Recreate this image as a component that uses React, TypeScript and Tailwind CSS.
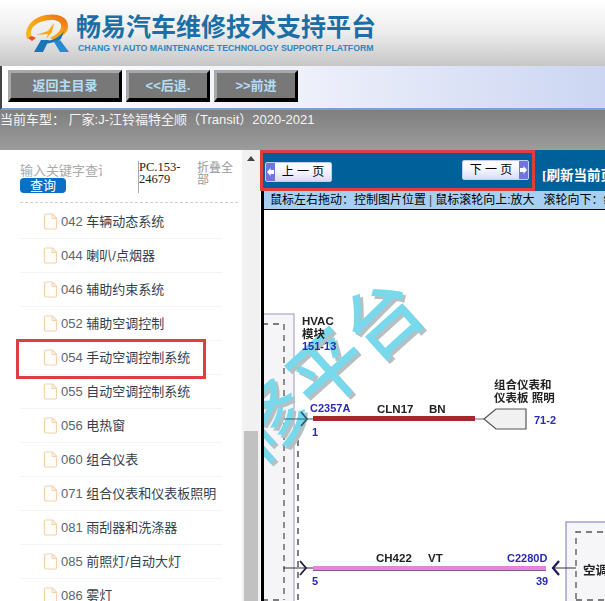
import React from "react";

const items = [
  ["042", "车辆动态系统"],
  ["044", "喇叭/点烟器"],
  ["046", "辅助约束系统"],
  ["052", "辅助空调控制"],
  ["054", "手动空调控制系统"],
  ["055", "自动空调控制系统"],
  ["056", "电热窗"],
  ["060", "组合仪表"],
  ["071", "组合仪表和仪表板照明"],
  ["081", "雨刮器和洗涤器"],
  ["085", "前照灯/自动大灯"],
  ["086", "雾灯"],
];

function FileIcon() {
  return (
    <svg width="15" height="17" viewBox="0 0 15 17" fill="none" className="shrink-0">
      <path d="M1.5 2.2q0-1.2 1.2-1.2h6.8l4 4.2v9.6q0 1.2-1.2 1.2h-9.6q-1.2 0-1.2-1.2z" stroke="#f2d3ae" strokeWidth="1.2" fill="#fffdfa" />
      <path d="M9.2 1v4.4h4.3" stroke="#f2d3ae" strokeWidth="1.1" />
    </svg>
  );
}

function Logo() {
  return (
    <svg width="48" height="42" viewBox="0 0 48 42" className="shrink-0">
      <defs>
        <linearGradient id="ring" x1="0" y1="1" x2="1" y2="0">
          <stop offset="0" stopColor="#f9bc20" />
          <stop offset="0.6" stopColor="#f59c14" />
          <stop offset="1" stopColor="#e8641b" />
        </linearGradient>
      </defs>
      <path d="M3 28C-1 18 8 6 22 4C34 2 44 6 44 15C44 22 38 26 30 29L26 27C32 24 38 20 37 14C36 9 28 8 20 10C10 12 4 20 8 26Z" fill="url(#ring)" />
      <path d="M12 24L24 20L30 12L28 21L22 28L24 23Z" fill="#f7a81a" />
      <path d="M4 27l4 3 4-3-4-2z" fill="#e4542a" />
      <path d="M10 41L17 29H25L19 41Z" fill="#1a74b8" />
      <path d="M30 31L36 29L45 41H36Z" fill="#2a8ad0" />
      <path d="M20 30C27 30 35 27 40 20L37 28C33 31 27 32 20 33Z" fill="#1a74b8" />
    </svg>
  );
}

function NavButton({ w, label }: { w: string; label: string }) {
  return (
    <div className={`${w} h-[32px] flex items-center justify-center bg-[#787878] border-[3px] border-t-[#a8a8a8] border-l-[#a8a8a8] border-r-black border-b-[4px] border-b-black text-[#b5dcf5] font-bold text-[13px] whitespace-pre`}>
      {label}
    </div>
  );
}

function PageButton({ label, side }: { label: string; side: "left" | "right" }) {
  const arrow = (
    <div className="w-[9px] self-stretch bg-[#6f74e0] flex items-center justify-center">
      <svg width="7" height="8" viewBox="0 0 7 8">
        {side === "left" ? <path d="M0 4l3.5-4v2h3.5v4h-3.5v2z" fill="#fff" /> : <path d="M7 4l-3.5-4v2h-3.5v4h3.5v2z" fill="#fff" />}
      </svg>
    </div>
  );
  return (
    <div className="w-[67px] h-[20px] flex items-center bg-gradient-to-b from-white via-[#f4f4ff] to-[#d8dcf6] border border-[#c4ccf0] rounded-[2px] overflow-hidden">
      {side === "left" && arrow}
      <div className="flex-1 text-center text-[12px] text-black whitespace-pre leading-none">{label}</div>
      {side === "right" && arrow}
    </div>
  );
}

function Diagram() {
  const blue = "#2a2ab8";
  const t = { fontFamily: '"Liberation Sans", "Noto Sans CJK SC", sans-serif', fontWeight: 700 };
  return (
    <svg viewBox="264 210 341 391" width="341" height="391" className="block blur-[0.35px]">
      <rect x="255" y="314" width="39" height="300" fill="#f5f5f7" stroke="#a9a6cf" strokeWidth="1.2" />
      <rect x="566" y="522" width="60" height="90" fill="#f6f6f9" stroke="#8f8cc0" strokeWidth="1.2" />
      <path d="M262 324H284V600M262 600H280" fill="none" stroke="#555" strokeWidth="1.3" strokeDasharray="6 5" />
      <path d="M298 440V601" fill="none" stroke="#555" strokeWidth="1.5" strokeDasharray="6 5" />
      <path d="M576 610V532H610M576 600H610" fill="none" stroke="#555" strokeWidth="1.3" strokeDasharray="6 5" />

      <g fontFamily='"Noto Sans CJK SC", sans-serif' fontWeight="500" fontSize="76">
        <g fill="#b4c0c3" transform="translate(3 3)">
          <text transform="translate(258 466) rotate(-42)">修</text>
          <text transform="translate(318 415) rotate(-42)">平</text>
          <text transform="translate(373 365) rotate(-42)">台</text>
        </g>
        <g fill="#78d8ec">
          <text transform="translate(258 466) rotate(-42)">修</text>
          <text transform="translate(318 415) rotate(-42)">平</text>
          <text transform="translate(373 365) rotate(-42)">台</text>
        </g>
      </g>

      <path d="M284 419H313" stroke="#1f6f86" strokeWidth="1" />
      <path d="M301 412L307 419L301 426" fill="none" stroke="#1f5f76" strokeWidth="1.7" />
      <rect x="313" y="416" width="162" height="5" fill="#a5282c" />
      <path d="M475 419H484" stroke="#666" strokeWidth="1" />
      <path d="M484 419L496 409H526V429H496Z" fill="#f1f1f1" stroke="#555" strokeWidth="1.2" />

      <rect x="313" y="566" width="233" height="5" fill="#e285dc" />
      <rect x="313" y="570" width="233" height="1" fill="#8a5a88" />
      <path d="M283 568H313" stroke="#333" strokeWidth="1" />
      <path d="M300 561L306 568L300 575" fill="none" stroke="#1c1c3c" strokeWidth="1.8" />
      <path d="M552 568H576" stroke="#333" strokeWidth="1" />
      <path d="M559 561L553 568L559 575" fill="none" stroke="#1c1c5c" strokeWidth="2.2" />

      <g style={t} fontSize="11.5" fill="#222">
        <text x="302" y="325">HVAC</text>
        <text x="302" y="338">模块</text>
        <text x="377" y="413">CLN17</text>
        <text x="429" y="413">BN</text>
        <text x="494" y="389">组合仪表和</text>
        <text x="494" y="402">仪表板 照明</text>
        <text x="376" y="562">CH422</text>
        <text x="428" y="562">VT</text>
        <text x="583" y="575" fontSize="12.5">空调</text>
      </g>
      <g style={t} fontSize="11" fill={blue}>
        <text x="302" y="350">151-13</text>
        <text x="310" y="412">C2357A</text>
        <text x="312" y="436">1</text>
        <text x="534" y="424">71-2</text>
        <text x="507" y="562">C2280D</text>
        <text x="312" y="585">5</text>
        <text x="536" y="585">39</text>
      </g>
    </svg>
  );
}

export default function App() {
  return (
    <div className="w-[605px] h-[601px] overflow-hidden flex flex-col bg-white font-['Liberation_Sans','Noto_Sans_CJK_SC',sans-serif]">
      {/* Header */}
      <div className="h-[66px] shrink-0 flex items-start pl-[24px] pt-[11px] gap-[4px] bg-gradient-to-b from-white via-[#ececec] to-[#c6c6c6]">
        <Logo />
        <div className="flex flex-col mt-[2px]">
          <div className="text-[25px] leading-[28px] font-bold text-[#1c6fa6] whitespace-nowrap">畅易汽车维修技术支持平台</div>
          <div className="text-[8.75px] leading-[11px] mt-[2px] ml-[2px] font-bold text-[#2f86c5] whitespace-nowrap">CHANG YI AUTO MAINTENANCE TECHNOLOGY SUPPORT PLATFORM</div>
        </div>
      </div>

      {/* Toolbar */}
      <div className="h-[44px] shrink-0 flex items-start gap-[4px] pl-[6px] pt-[4px] bg-gradient-to-r from-white via-[#eef0fa] to-[#ccd6f2] border-l-2 border-l-[#444] border-b-2 border-b-[#7c9cdc]">
        <NavButton w="w-[114px]" label="返回主目录" />
        <NavButton w="w-[84px]" label="<<后退." />
        <NavButton w="w-[84px]" label=">>前进" />
      </div>

      {/* Vehicle bar */}
      <div className="h-[40px] shrink-0 bg-gradient-to-b from-[#7f7f7f] to-[#9c9c9c] text-[#f4f4f4] text-[13px] leading-[19px] whitespace-nowrap">
        当前车型：&nbsp;厂家:J-江铃福特全顺（Transit）2020-2021
      </div>

      <div className="flex-1 flex min-h-0">
        {/* Sidebar */}
        <div className="w-[242px] shrink-0 pl-[20px] pr-[4px] overflow-hidden">
          <div className="h-[53px] flex border-b border-dashed border-b-[#cfcfcf]">
            <div className="w-[118px] pt-[14px] shrink-0">
              <div className="w-[82px] h-[14px] overflow-hidden text-[13px] leading-[14px] text-[#aaaaaa] whitespace-nowrap">输入关键字查询</div>
              <div className="w-[46px] h-[15px] bg-[#0b6fc6] rounded-[4px] text-white text-[13px] leading-[15px] text-center">查询</div>
            </div>
            <div className="w-[59px] shrink-0 mt-[11px] h-[32px] border-l border-l-[#aaaaaa] font-['Liberation_Serif',serif] text-[12.5px] leading-[12px] text-[#222]">PC.153-<br />24679</div>
            <div className="w-[38px] mt-[12px] text-[12px] leading-[12px] text-[#999999]">折叠全部</div>
          </div>
          <div className="mt-[2px]">
            {items.map(([no, name]) => {
              const selected = no === "054";
              return (
                <div key={no} className="relative w-[202px] h-[34px] flex items-center pl-[23px] gap-[3px] border-b border-b-[#f3f3f3] text-[13px] text-[#333f4f] whitespace-nowrap">
                  <FileIcon />
                  <span className="leading-none"><span className="text-[#5a6472]">{no}</span> {name}</span>
                  {selected && <div className="absolute -left-[4px] top-[-2px] w-[190px] h-[40px] border-[3px] border-[#df3e3e]" />}
                </div>
              );
            })}
          </div>
        </div>

        {/* Scrollbar */}
        <div className="w-[18px] shrink-0 bg-[#f1f1f1] flex flex-col items-center">
          <div className="mt-[6px] w-0 h-0 border-l-[4px] border-r-[4px] border-b-[5px] border-l-transparent border-r-transparent border-b-[#444]" />
          <div className="flex-1" />
          <div className="w-[14px] h-[170px] bg-[#c1c1c1]" />
        </div>

        {/* Viewer */}
        <div className="flex-1 min-w-0 flex flex-col overflow-hidden">
          <div className="h-[41px] shrink-0 flex bg-[#00609a]">
            <div className="w-[275px] shrink-0 border-[3px] border-[#df3e3e] flex justify-between items-start pl-[2px] pr-[3px]">
              <div className="mt-[9px]"><PageButton label="上 一 页" side="left" /></div>
              <div className="mt-[7px]"><PageButton label="下 一 页" side="right" /></div>
            </div>
            <div className="pl-[7px] pt-[18px] text-white font-bold text-[13.5px] leading-[16px] whitespace-nowrap font-['Liberation_Serif','Noto_Sans_CJK_SC',serif]">[刷新当前页]</div>
          </div>
          <div className="flex-1 min-h-0 ml-px border-l-[3px] border-l-black">
            <div className="h-[19px] bg-[#a6cff2] border-b border-b-black pl-[6px] text-[12px] leading-[18px] text-black whitespace-nowrap overflow-hidden">
              鼠标左右拖动：控制图片位置<span className="mx-[3px] text-[#445]">|</span>鼠标滚轮向上:放大<span className="ml-[9px]">滚轮向下：缩小</span>
            </div>
            <Diagram />
          </div>
        </div>
      </div>
    </div>
  );
}
